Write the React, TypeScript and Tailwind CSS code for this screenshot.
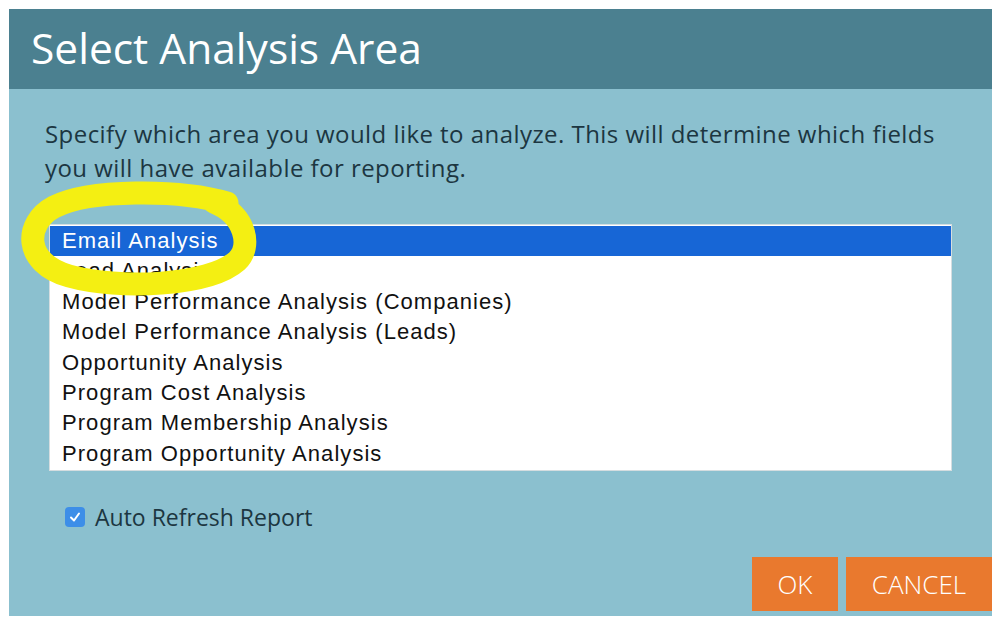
import React from "react";

const items = [
  "Email Analysis",
  "Lead Analysis",
  "Model Performance Analysis (Companies)",
  "Model Performance Analysis (Leads)",
  "Opportunity Analysis",
  "Program Cost Analysis",
  "Program Membership Analysis",
  "Program Opportunity Analysis",
];

export default function App() {
  return (
    <div className="w-[999px] h-[626px] bg-white pt-[9px] pl-[9px]" style={{ fontFamily: '"Open Sans", sans-serif' }}>
      <div className="relative w-[983px] h-[607px] bg-[#8bc0cf] flex flex-col">
        <div className="h-[80px] bg-[#4b8090] flex items-center pl-[22px]">
          <h1 className="text-[42.5px] text-white leading-none pb-[2px]">Select Analysis Area</h1>
        </div>
        <div className="flex flex-col px-[36px] pt-[28px]">
          <p className="text-[24px] tracking-[0.45px] leading-[34px] text-[#1c3641]">
            Specify which area you would like to analyze. This will determine which fields you will have available for reporting.
          </p>
          <div
            className="mt-[39px] mx-[4px] bg-white border border-[#d5dde0] py-[1px]"
            style={{ fontFamily: '"Liberation Sans", Arial, sans-serif' }}
          >
            {items.map((t, i) => (
              <div
                key={t}
                className={
                  "h-[30.4px] leading-[30.4px] pl-[12px] text-[22px] tracking-[1.05px] " +
                  (i === 0 ? "bg-[#1766d6] text-white" : "text-[#111]")
                }
              >
                {t}
              </div>
            ))}
          </div>
          <div className="mt-[31px] flex items-center h-[30px] pl-[20px] gap-[10px]">
            <div className="w-[20px] h-[20px] rounded-[4px] bg-[#3d8ee8] flex items-center justify-center">
              <svg width="14" height="14" viewBox="0 0 14 14" fill="none">
                <path d="M3 7.5 L6 10.5 L11 3.5" stroke="white" strokeWidth="2" strokeLinecap="round" strokeLinejoin="round" />
              </svg>
            </div>
            <span className="text-[23px] text-[#1c3641]">Auto Refresh Report</span>
          </div>
        </div>
        <div className="mt-auto mb-[5px] flex justify-end gap-[8px]">
          <button className="w-[86px] h-[54px] bg-[#e9792e] text-white text-[26px] font-light">OK</button>
          <button className="w-[146px] h-[54px] bg-[#e9792e] text-white text-[26px] font-light">CANCEL</button>
        </div>
        <svg className="absolute left-0 top-0 pointer-events-none" width="983" height="607" viewBox="0 0 983 607">
          <path
            d="M 218 194 C 170 180, 80 180, 45 198 C 15 214, 14 254, 60 267 C 110 281, 200 277, 228 252 C 243 238, 237 206, 205 193"
            stroke="#f4ef12"
            strokeWidth="23"
            fill="none"
            strokeLinecap="round"
          />
        </svg>
      </div>
    </div>
  );
}
